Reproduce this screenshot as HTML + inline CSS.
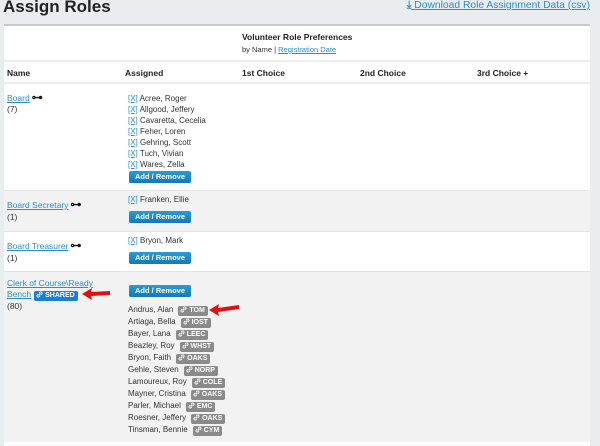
<!DOCTYPE html>
<html><head><meta charset="utf-8"><style>
body{margin:0;width:600px;height:436px;overflow:hidden;background:#e9edf0;font-family:"Liberation Sans",sans-serif;font-size:8px;color:#333;position:relative}
.abs{position:absolute;white-space:nowrap}
h1{position:absolute;left:3px;top:-3px;margin:0;font-size:17px;font-weight:bold;color:#222}
.dl{right:10px;top:0;color:#2a8fc9;font-size:10.3px;text-decoration:underline}
.panel{position:absolute;left:4px;top:24px;width:586px;height:420px;background:#fff;border-top:2px solid #c8c8c8}
a{color:#2a8fc9;text-decoration:underline}
.line{position:absolute;left:4px;width:586px;height:2px;background:#eee}
.row{position:absolute;left:4px;width:586px}
.gray{background:#f2f2f2}
.th{font-weight:bold;font-size:8.5px;color:#222}
.btn{position:absolute;width:62px;height:12px;background:linear-gradient(#2a9ad8,#0f7ab8);border-radius:2px;color:#fff;font-weight:bold;font-size:7.5px;text-align:center;line-height:12px}
.x{color:#2a8fc9;text-decoration:underline}
.b{display:inline-block;background:#8a8a8a;color:#fff;font-weight:bold;font-size:7px;padding:0 3px 0 2px;border-radius:2px;line-height:10px;margin-left:5px;vertical-align:0}
.b svg{vertical-align:-1px;margin-right:2px}
.sh{background:#1a7fd0}
.key{font-size:11px;font-weight:bold;color:#111;margin-left:2px;line-height:8px}
</style></head><body>
<h1>Assign Roles</h1>
<div class="abs dl"><b style="text-decoration:none;display:inline-block">⤓</b> Download Role Assignment Data (csv)</div>
<div class="panel"></div>
<div class="abs th" style="left:242px;top:32px">Volunteer Role Preferences</div>
<div class="abs" style="left:242px;top:45px;font-size:7.5px">by Name | <a>Registration Date</a></div>
<div class="line" style="top:60px"></div>
<div class="abs th" style="left:7px;top:68px">Name</div>
<div class="abs th" style="left:125px;top:68px">Assigned</div>
<div class="abs th" style="left:242px;top:68px">1st Choice</div>
<div class="abs th" style="left:360px;top:68px">2nd Choice</div>
<div class="abs th" style="left:477px;top:68px">3rd Choice +</div>
<div class="line" style="top:82px"></div>
<div class="row gray" style="top:190px;height:41px;border-top:1px solid #e4e4e4"></div>
<div class="row" style="top:231px;height:40px;border-top:1px solid #e4e4e4"></div>
<div class="row gray" style="top:271px;height:170px;border-top:1px solid #e4e4e4"></div>

<div class="abs" style="left:7px;top:93px;font-size:8.5px;line-height:11px"><a>Board</a><span class="key">⊶</span><br>(7)</div>
<div class="abs" style="left:128px;top:93px;line-height:11px"><span class="x">[X]</span> Acree, Roger<br><span class="x">[X]</span> Allgood, Jeffery<br><span class="x">[X]</span> Cavaretta, Cecelia<br><span class="x">[X]</span> Feher, Loren<br><span class="x">[X]</span> Gehring, Scott<br><span class="x">[X]</span> Tuch, Vivian<br><span class="x">[X]</span> Wares, Zella</div>
<div class="btn" style="left:129px;top:171px">Add / Remove</div>

<div class="abs" style="left:7px;top:199px;line-height:12px;font-size:8.5px"><a>Board Secretary</a><span class="key">⊶</span><br>(1)</div>
<div class="abs" style="left:128px;top:195px"><span class="x">[X]</span> Franken, Ellie</div>
<div class="btn" style="left:129px;top:211px">Add / Remove</div>

<div class="abs" style="left:7px;top:240px;line-height:12px;font-size:8.5px"><a>Board Treasurer</a><span class="key">⊶</span><br>(1)</div>
<div class="abs" style="left:128px;top:236px"><span class="x">[X]</span> Bryon, Mark</div>
<div class="btn" style="left:129px;top:252px">Add / Remove</div>

<div class="abs" style="left:7px;top:278px;line-height:10.5px;font-size:8.5px"><a>Clerk of Course\Ready</a><br><a>Bench</a><span class="b sh" style="margin-left:3px"><svg width="7" height="7" viewBox="0 0 8 8"><path d="M3 5 L5 3 M2.5 3.5 L1.5 4.5 a1.4 1.4 0 0 0 2 2 L4.5 5.5 M3.5 2.5 L4.5 1.5 a1.4 1.4 0 0 1 2 2 L5.5 4.5" stroke="#fff" stroke-width="1.1" fill="none"/></svg>SHARED</span><br>(80)</div>
<div class="btn" style="left:129px;top:285px">Add / Remove</div>
<div class="abs" style="left:128px;top:304px;line-height:12px">
Andrus, Alan<span class="b"><svg width="7" height="7" viewBox="0 0 8 8"><path d="M3 5 L5 3 M2.5 3.5 L1.5 4.5 a1.4 1.4 0 0 0 2 2 L4.5 5.5 M3.5 2.5 L4.5 1.5 a1.4 1.4 0 0 1 2 2 L5.5 4.5" stroke="#fff" stroke-width="1.1" fill="none"/></svg>TOM</span><br>
Artiaga, Bella<span class="b"><svg width="7" height="7" viewBox="0 0 8 8"><path d="M3 5 L5 3 M2.5 3.5 L1.5 4.5 a1.4 1.4 0 0 0 2 2 L4.5 5.5 M3.5 2.5 L4.5 1.5 a1.4 1.4 0 0 1 2 2 L5.5 4.5" stroke="#fff" stroke-width="1.1" fill="none"/></svg>IOST</span><br>
Bayer, Lana<span class="b"><svg width="7" height="7" viewBox="0 0 8 8"><path d="M3 5 L5 3 M2.5 3.5 L1.5 4.5 a1.4 1.4 0 0 0 2 2 L4.5 5.5 M3.5 2.5 L4.5 1.5 a1.4 1.4 0 0 1 2 2 L5.5 4.5" stroke="#fff" stroke-width="1.1" fill="none"/></svg>LEEC</span><br>
Beazley, Roy<span class="b"><svg width="7" height="7" viewBox="0 0 8 8"><path d="M3 5 L5 3 M2.5 3.5 L1.5 4.5 a1.4 1.4 0 0 0 2 2 L4.5 5.5 M3.5 2.5 L4.5 1.5 a1.4 1.4 0 0 1 2 2 L5.5 4.5" stroke="#fff" stroke-width="1.1" fill="none"/></svg>WHST</span><br>
Bryon, Faith<span class="b"><svg width="7" height="7" viewBox="0 0 8 8"><path d="M3 5 L5 3 M2.5 3.5 L1.5 4.5 a1.4 1.4 0 0 0 2 2 L4.5 5.5 M3.5 2.5 L4.5 1.5 a1.4 1.4 0 0 1 2 2 L5.5 4.5" stroke="#fff" stroke-width="1.1" fill="none"/></svg>OAKS</span><br>
Gehle, Steven<span class="b"><svg width="7" height="7" viewBox="0 0 8 8"><path d="M3 5 L5 3 M2.5 3.5 L1.5 4.5 a1.4 1.4 0 0 0 2 2 L4.5 5.5 M3.5 2.5 L4.5 1.5 a1.4 1.4 0 0 1 2 2 L5.5 4.5" stroke="#fff" stroke-width="1.1" fill="none"/></svg>NORP</span><br>
Lamoureux, Roy<span class="b"><svg width="7" height="7" viewBox="0 0 8 8"><path d="M3 5 L5 3 M2.5 3.5 L1.5 4.5 a1.4 1.4 0 0 0 2 2 L4.5 5.5 M3.5 2.5 L4.5 1.5 a1.4 1.4 0 0 1 2 2 L5.5 4.5" stroke="#fff" stroke-width="1.1" fill="none"/></svg>COLE</span><br>
Mayner, Cristina<span class="b"><svg width="7" height="7" viewBox="0 0 8 8"><path d="M3 5 L5 3 M2.5 3.5 L1.5 4.5 a1.4 1.4 0 0 0 2 2 L4.5 5.5 M3.5 2.5 L4.5 1.5 a1.4 1.4 0 0 1 2 2 L5.5 4.5" stroke="#fff" stroke-width="1.1" fill="none"/></svg>OAKS</span><br>
Parler, Michael<span class="b"><svg width="7" height="7" viewBox="0 0 8 8"><path d="M3 5 L5 3 M2.5 3.5 L1.5 4.5 a1.4 1.4 0 0 0 2 2 L4.5 5.5 M3.5 2.5 L4.5 1.5 a1.4 1.4 0 0 1 2 2 L5.5 4.5" stroke="#fff" stroke-width="1.1" fill="none"/></svg>EMC</span><br>
Roesner, Jeffery<span class="b"><svg width="7" height="7" viewBox="0 0 8 8"><path d="M3 5 L5 3 M2.5 3.5 L1.5 4.5 a1.4 1.4 0 0 0 2 2 L4.5 5.5 M3.5 2.5 L4.5 1.5 a1.4 1.4 0 0 1 2 2 L5.5 4.5" stroke="#fff" stroke-width="1.1" fill="none"/></svg>OAKS</span><br>
Tinsman, Bennie<span class="b"><svg width="7" height="7" viewBox="0 0 8 8"><path d="M3 5 L5 3 M2.5 3.5 L1.5 4.5 a1.4 1.4 0 0 0 2 2 L4.5 5.5 M3.5 2.5 L4.5 1.5 a1.4 1.4 0 0 1 2 2 L5.5 4.5" stroke="#fff" stroke-width="1.1" fill="none"/></svg>CYM</span></div>
<svg class="abs" style="left:80px;top:287px" width="32" height="14"><path d="M2 7 L12 1 L11 5 L30 4 L30 8 L11 9 L12 13 Z" fill="#e01010"/></svg>
<svg class="abs" style="left:207px;top:302px" width="34" height="14"><path d="M2 8 L12 2 L11 6 L32 3 L32 7 L11 10 L12 14 Z" fill="#e01010"/></svg>
</body></html>
